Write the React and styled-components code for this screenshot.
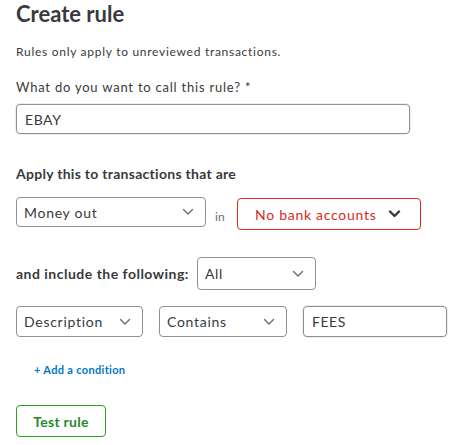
import React from "react";
import styled, { createGlobalStyle } from "styled-components";

const GlobalStyle = createGlobalStyle`
  body {
    margin: 0;
    padding: 0;
    background: #ffffff;
    font-family: Lato, "Open Sans", sans-serif;
    color: #393a3d;
  }
`;

const Page = styled.div`
  display: flex;
  flex-direction: column;
  align-items: flex-start;
  padding: 0 16px;
  letter-spacing: 0.045em;
`;

const Title = styled.h1`
  margin: 0;
  font-size: 22px;
  line-height: 28px;
  font-weight: 700;
  letter-spacing: 0;
  color: #393a3d;
`;

const Subtitle = styled.p`
  margin: 16px 0 0;
  font-size: 12px;
  line-height: 16px;
`;

const Label = styled.label`
  margin-top: 19px;
  font-size: 13px;
  line-height: 16px;
  letter-spacing: 0.06em;
`;

const TextInput = styled.input`
  box-sizing: border-box;
  width: ${(props) => props.$width}px;
  height: ${(props) => props.$height || 30}px;
  margin-top: ${(props) => props.$top || 0}px;
  padding: 0 8px;
  border: 1px solid #8d9096;
  border-radius: 4px;
  box-shadow: 0 0 0 1px #eceef1;
  font-family: inherit;
  font-size: 14px;
  letter-spacing: 0.04em;
  color: #393a3d;
  outline: none;
`;

const SectionHeading = styled.div`
  margin-top: 30px;
  font-size: 14px;
  line-height: 20px;
  font-weight: 700;
  letter-spacing: 0.02em;
`;

const Row = styled.div`
  display: flex;
  align-items: ${(props) => props.$align || "flex-start"};
  gap: ${(props) => props.$gap || 0}px;
  margin-top: ${(props) => props.$top}px;
`;

const SelectBox = styled.div`
  box-sizing: border-box;
  display: flex;
  align-items: center;
  justify-content: space-between;
  width: ${(props) => props.$width}px;
  height: ${(props) => props.$height || 30}px;
  margin-top: ${(props) => props.$offset || 0}px;
  padding: ${(props) => (props.$error ? "0 19px 0 17px" : "0 11px 0 7px")};
  border: 1px solid ${(props) => (props.$error ? "#d52b1e" : "#8d9096")};
  border-radius: 4px;
  font-size: 14px;
  color: ${(props) => (props.$error ? "#d52b1e" : "#393a3d")};
`;

const InWord = styled.span`
  width: 10px;
  margin: 6px 12px 0 9px;
  align-self: center;
  font-size: 12px;
  letter-spacing: 0.02em;
  color: #6b6c72;
`;

const IncludeLabel = styled.span`
  font-size: 14px;
  font-weight: 700;
  letter-spacing: 0.035em;
`;

const AddLink = styled.a`
  margin-top: 26px;
  padding-left: 18px;
  font-size: 11px;
  line-height: 14px;
  font-weight: 700;
  letter-spacing: 0.03em;
  color: #0077c5;
  text-decoration: none;
  cursor: pointer;
`;

const TestButton = styled.button`
  box-sizing: border-box;
  width: 90px;
  height: 32px;
  margin-top: 28px;
  border: 1px solid #2ca01c;
  border-radius: 4px;
  background: #ffffff;
  font-family: inherit;
  font-size: 14px;
  font-weight: 700;
  letter-spacing: 0.02em;
  color: #1f8b2e;
  cursor: pointer;
`;

const Chevron = ({ bold }) => (
  <svg
    width={bold ? 13 : 12}
    height="8"
    viewBox="0 0 12 8"
    fill="none"
    stroke={bold ? "#393a3d" : "#6b6c72"}
    strokeWidth={bold ? 2.4 : 1.4}
    strokeLinecap="round"
    strokeLinejoin="round"
  >
    <path d="M1.5 1.5l4.5 4.5 4.5-4.5" />
  </svg>
);

const Select = ({ value, width, height, error, offset }) => (
  <SelectBox $width={width} $height={height} $error={error} $offset={offset}>
    <span>{value}</span>
    <Chevron bold={error} />
  </SelectBox>
);

const App = () => {
  return (
    <>
      <GlobalStyle />
      <Page>
        <Title>Create rule</Title>
        <Subtitle>Rules only apply to unreviewed transactions.</Subtitle>
        <Label>What do you want to call this rule? *</Label>
        <TextInput $width={394} $top={9} defaultValue="EBAY" />

        <SectionHeading>Apply this to transactions that are</SectionHeading>
        <Row $top={13}>
          <Select value="Money out" width={190} />
          <InWord>in</InWord>
          <Select value="No bank accounts" width={184} height={32} error offset={1} />
        </Row>

        <Row $top={27} $align="center" $gap={8}>
          <IncludeLabel>and include the following:</IncludeLabel>
          <Select value="All" width={119} height={33} />
        </Row>

        <Row $top={16} $gap={16}>
          <Select value="Description" width={127} height={31} />
          <Select value="Contains" width={128} height={31} />
          <TextInput $width={144} $height={31} defaultValue="FEES" />
        </Row>

        <AddLink>+ Add a condition</AddLink>
        <TestButton>Test rule</TestButton>
      </Page>
    </>
  );
};

export default App;
